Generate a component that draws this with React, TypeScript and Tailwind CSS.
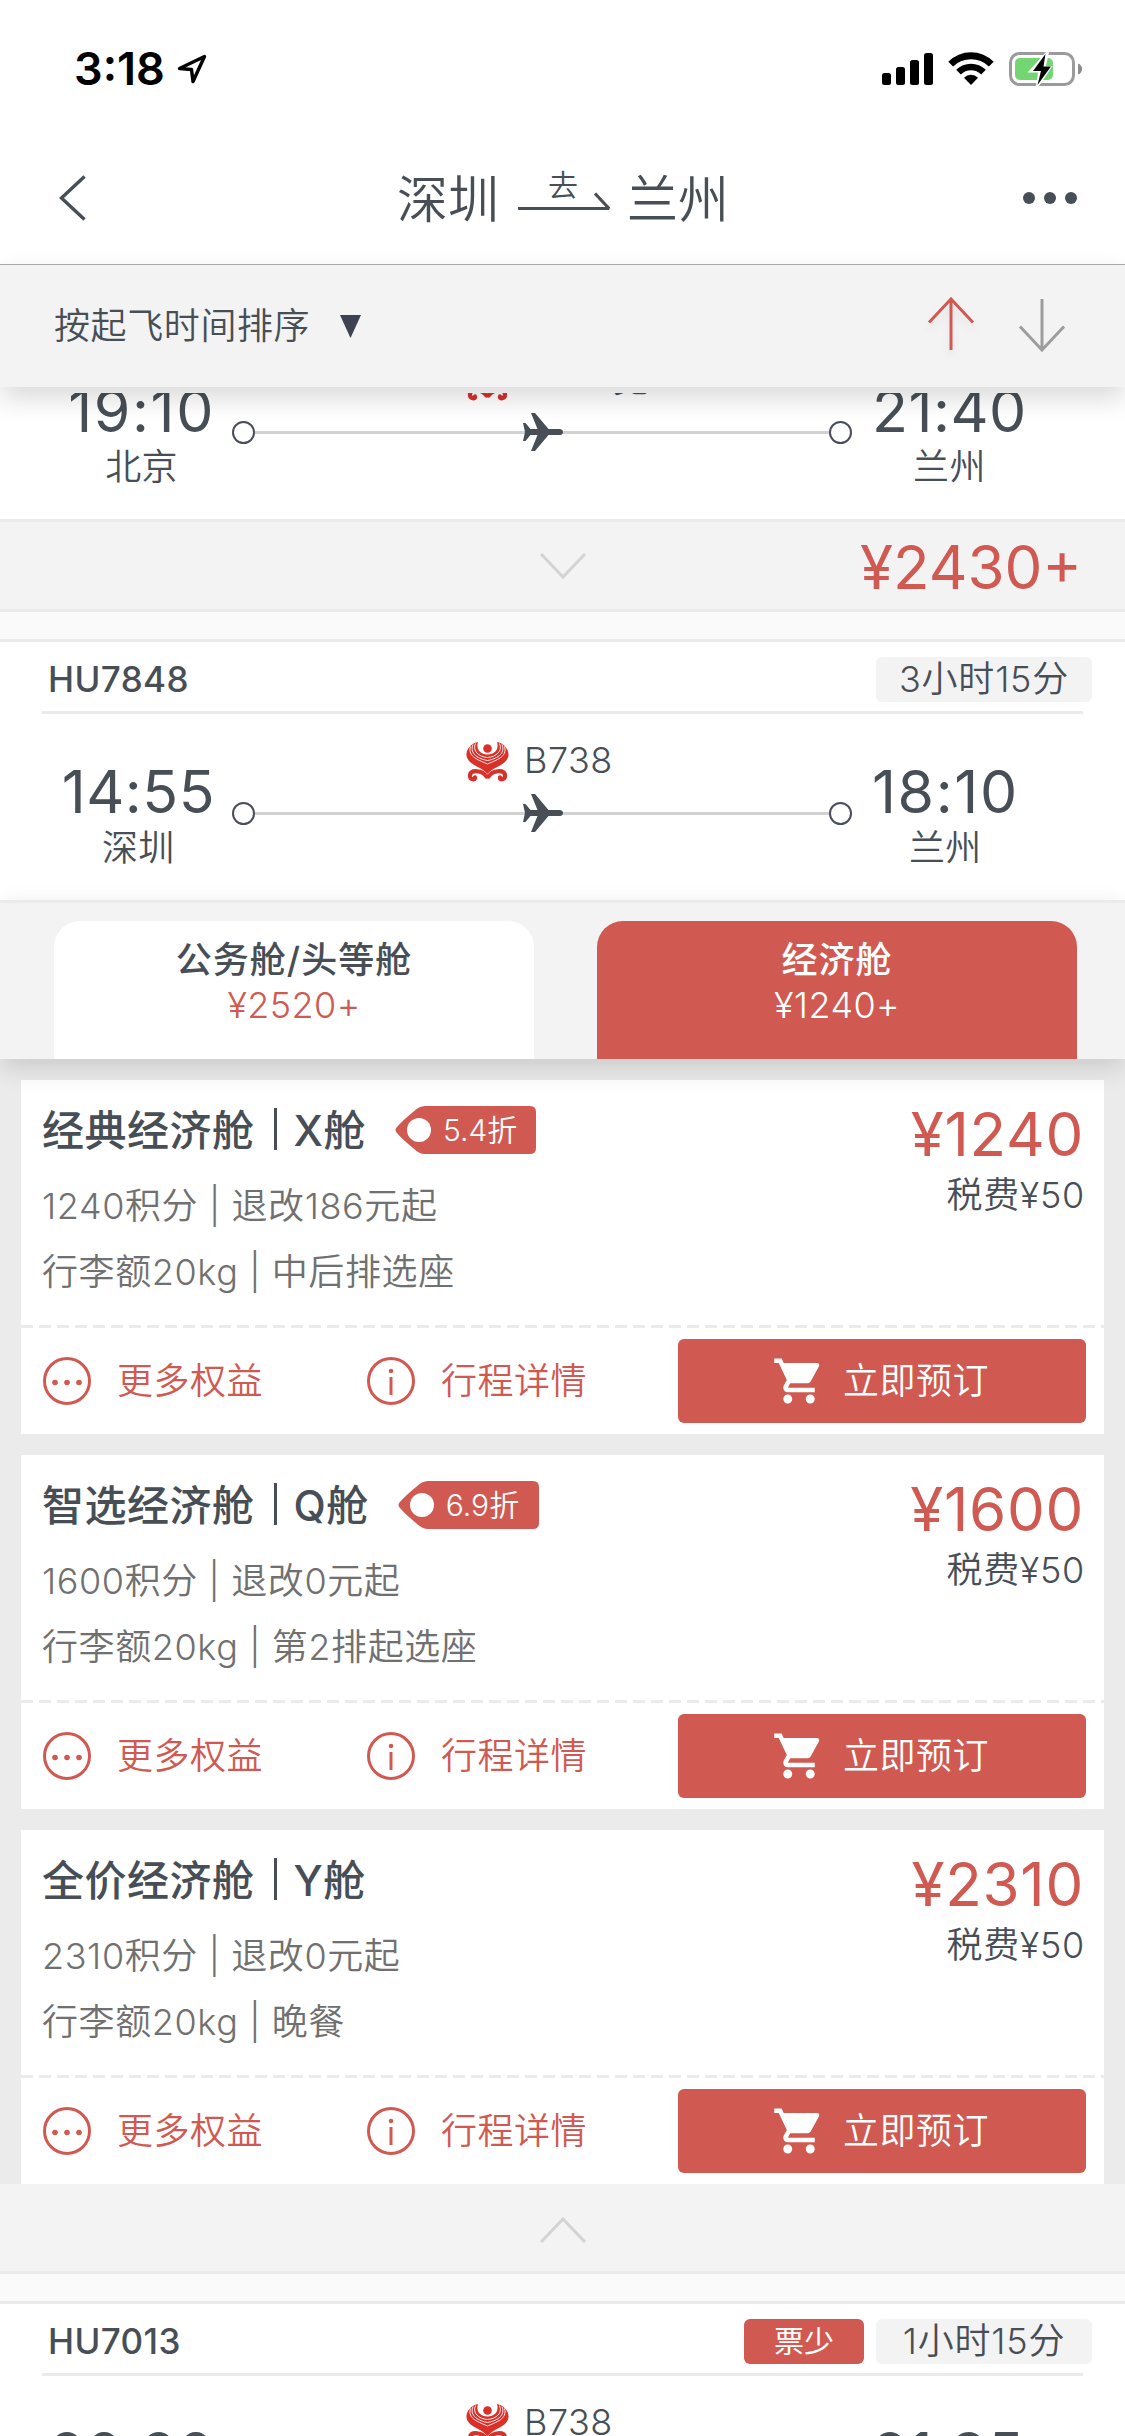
import { MdShoppingCart } from "react-icons/md";

type Flight = {
  no: string;
  duration: string;
  fewLeft?: boolean;
  plane: string;
  depTime: string;
  depCity: string;
  arrTime: string;
  arrCity: string;
};

type Fare = {
  name: string;
  cabin: string;
  discount?: string;
  points: string;
  perks: string;
  price: string;
};

const flights: Flight[] = [
  { no: "HU7197", duration: "2小时30分", plane: "B788宽", depTime: "19:10", depCity: "北京", arrTime: "21:40", arrCity: "兰州" },
  { no: "HU7848", duration: "3小时15分", plane: "B738", depTime: "14:55", depCity: "深圳", arrTime: "18:10", arrCity: "兰州" },
  { no: "HU7013", duration: "1小时15分", fewLeft: true, plane: "B738", depTime: "20:20", depCity: "西安", arrTime: "21:35", arrCity: "兰州" },
];

const fares: Fare[] = [
  { name: "经典经济舱", cabin: "X舱", discount: "5.4折", points: "1240积分 | 退改186元起", perks: "行李额20kg | 中后排选座", price: "¥1240" },
  { name: "智选经济舱", cabin: "Q舱", discount: "6.9折", points: "1600积分 | 退改0元起", perks: "行李额20kg | 第2排起选座", price: "¥1600" },
  { name: "全价经济舱", cabin: "Y舱", points: "2310积分 | 退改0元起", perks: "行李额20kg | 晚餐", price: "¥2310" },
];

function StatusBar() {
  return (
    <div className="flex h-[132px] items-start justify-between pt-[42px] pr-[42px] pl-[74px] text-black">
      <div className="flex items-center">
        <span className="text-[45px] leading-[54px] font-semibold">3:18</span>
        <svg className="ml-3 size-[30px]" viewBox="0 0 30 30" fill="none" stroke="currentColor" strokeWidth="3.4" strokeLinejoin="round">
          <path d="M27.5 2.5 L2.5 14.5 L14.5 15.5 L16 27.5 Z" />
        </svg>
      </div>
      <div className="mt-2.5 flex items-start">
        <svg className="h-[34px] w-[52px]" viewBox="0 0 52 34">
          <rect x="0" y="21" width="9" height="12" rx="2.5" />
          <rect x="14" y="15" width="9" height="18" rx="2.5" />
          <rect x="28" y="8" width="9" height="25" rx="2.5" />
          <rect x="42" y="1" width="9" height="32" rx="2.5" />
        </svg>
        <svg className="ml-3.5 h-[34px] w-[46px]" viewBox="0 0 46 34">
          <path d="M0.3 9.8 A32 32 0 0 1 45.7 9.8 L40.9 14.6 A25.2 25.2 0 0 0 5.1 14.6 Z" />
          <path d="M8.2 17.8 A21 21 0 0 1 37.8 17.8 L33.2 22.4 A14.4 14.4 0 0 0 12.8 22.4 Z" />
          <path d="M16 25.7 A10 10 0 0 1 30 25.7 L23 33 Z" />
        </svg>
        <svg className="ml-[15px] h-[34px] w-[74px]" viewBox="0 0 74 34">
          <rect x="1.5" y="1.5" width="63" height="31" rx="9" fill="none" stroke="#9b9b9b" strokeWidth="3" />
          <path d="M69 11.5 C74.5 13 74.5 21 69 22.5 Z" fill="#8e8e8e" />
          <rect x="6" y="6" width="38" height="22" rx="5" fill="#74d673" />
          <path d="M37 0 L18.5 20.5 H29 L27 34 H30 L43.5 14 H37 L40 0 Z" fill="#fff" />
          <path d="M36.5 2 L24 19 H32 L28.5 33 L42 14.5 H34.5 Z" />
        </svg>
      </div>
    </div>
  );
}

function NavBar() {
  return (
    <div className="flex h-[132px] items-center justify-between pr-12 pl-[58px] text-[#474e56]">
      <svg className="h-[46px] w-[54px]" viewBox="0 0 54 46" fill="none" stroke="currentColor" strokeWidth="3.4">
        <path d="M26.5 1.5 L3.5 23 L26.5 44.5" />
      </svg>
      <div className="mr-[9px] flex items-center pt-[3px] text-[51px] leading-[60px] font-[350]">
        <span>深圳</span>
        <div className="mr-[15px] ml-[19px] flex flex-col items-center pb-[13px]">
          <span className="-mt-[5px] -ml-1 text-[30px] leading-[28px] font-[350]">去</span>
          <svg className="-mt-[8px] h-[20px] w-[94px]" viewBox="0 0 94 20" fill="none" stroke="currentColor" strokeWidth="3.2">
            <path d="M0 17.5 H91 L77 2.5" strokeLinejoin="bevel" />
          </svg>
        </div>
        <span>兰州</span>
      </div>
      <div className="flex w-[54px] gap-[9px]">
        <span className="size-3 rounded-full bg-[#474e56]" />
        <span className="size-3 rounded-full bg-[#474e56]" />
        <span className="size-3 rounded-full bg-[#474e56]" />
      </div>
    </div>
  );
}

function SortBar() {
  return (
    <div className="relative z-10 flex h-[123px] items-center border-t border-[#a9a9a9] bg-[#f3f3f3] pr-[59px] pl-[54px] shadow-[0_12px_24px_rgba(0,0,0,0.14)]">
      <span className="text-[36px] leading-[54px] font-[350] tracking-[0.6px] text-[#474e56]">按起飞时间排序</span>
      <svg className="ml-[30px] h-[23px] w-[21px]" viewBox="0 0 21 23" fill="#3d4152">
        <path d="M0 0 H21 L10.5 23 Z" />
      </svg>
      <svg className="mr-[43px] mb-[5px] ml-auto h-[54px] w-[48px] drop-shadow-[0_6px_4px_rgba(0,0,0,0.08)]" viewBox="0 0 48 54" fill="none" stroke="#d05a51" strokeWidth="3">
        <path d="M24 53 V2 M2 25.5 L24 2 L46 25.5" />
      </svg>
      <svg className="mb-[2px] h-[54px] w-[48px]" viewBox="0 0 48 54" fill="none" stroke="#9d9d9d" strokeWidth="3">
        <path d="M24 1 V52 M2 28.5 L24 52 L46 28.5" />
      </svg>
    </div>
  );
}

function AirlineLogo() {
  return (
    <svg className="h-[41px] w-[43px]" viewBox="0 0 43 41" fill="none">
      <path
        d="M12 1 C2 3 -2 13 2 18.500 C6 25 16 26 21.500 33 C27 26 37 25 41 18.500 C45 13 41 3 31 1 C33 7 30 13.500 21.500 13.500 C13 13.500 10 7 12 1 Z"
        fill="#d9302a"
      />
      <circle cx="21.5" cy="7.5" r="4.3" fill="#d9302a" />
      <g stroke="#fff" strokeWidth="0.9">
        <path d="M9.500 2.500 C6 10 13 16 21.500 16.500 C30 16 37 10 33.500 2.500" />
        <path d="M7 3.500 C3 13 13 18 21.500 19.500 C30 18 40 13 36 3.500" />
        <path d="M4.500 5.500 C1 16 14 19.500 21.500 23 C29 19.500 42 16 38.500 5.500" />
      </g>
      <g stroke="#d9302a" strokeWidth="4.2" strokeLinecap="round">
        <path d="M20.500 35.500 C16 29 5 28.500 4 34 C3.500 39.500 10 39 9 36.500" />
        <path d="M22.500 35.500 C27 29 38 28.500 39 34 C39.500 39.500 33 39 34 36.500" />
      </g>
    </svg>
  );
}

function Route() {
  return (
    <div className="relative flex h-6 items-center">
      <span className="size-[23px] rounded-full border-2 border-[#4a4d5c] bg-white" />
      <span className="mt-[1px] h-[3px] flex-1 bg-[#d2d2d2]" />
      <span className="size-[23px] rounded-full border-2 border-[#4a4d5c] bg-white" />
      <svg className="absolute -top-[7px] left-[291px] h-[38px] w-[40px]" viewBox="0 0 40 38" fill="#474e56">
        <path d="M8 0 H12 L25.500 16 H37 Q40 16.500 40 19 Q40 21.500 37 22 H25.500 L12 38 H8 L14.500 22 H7.500 L2.500 28 H0 L2 19 L0 10 H2.500 L7.500 16 H14.500 Z" />
      </svg>
    </div>
  );
}

function Stop({ time, city }: { time: string; city: string }) {
  // times with two narrow 1s are set a little wider
  const narrow = time.split("1").length > 2;
  return (
    <div className="flex flex-col items-center">
      <span className={`text-[59px] leading-[72px] font-[380] ${narrow ? "tracking-[1.6px]" : "tracking-[0.5px]"}`}>{time}</span>
      <span className="text-[36px] leading-[40px] font-[350] tracking-[0.3px]">{city}</span>
    </div>
  );
}

function FlightCard({ flight }: { flight: Flight }) {
  return (
    <div className="h-[258px] bg-white text-[#474e56]">
      <div className="mr-[33px] ml-[42px] flex h-[69px] items-center justify-end pt-[6px]">
        <span className="mr-auto mb-[2px] ml-[6px] text-[35px] leading-[44px] font-medium tracking-[0.4px]">{flight.no}</span>
        {flight.fewLeft && (
          <span className="mr-3 w-[120px] rounded-md bg-[#d05a51] text-center text-[30px] leading-[45px] text-white">票少</span>
        )}
        <span className="h-[45px] w-[216px] rounded-md bg-[#f3f3f3] text-center text-[36px] leading-[45px] font-[350] tracking-[0.8px]">
          {flight.duration}
        </span>
      </div>
      <div className="mx-[42px] h-[3px] bg-[#ebebeb]" />
      <div className="flex h-[186px] pt-[41px] pl-[60px]">
        <div className="flex w-[172px] shrink-0 justify-end pt-[1px] pr-[17px]">
          <Stop time={flight.depTime} city={flight.depCity} />
        </div>
        <div className="flex w-[620px] shrink-0 flex-col">
          <div className="mt-[-20px] ml-[234px] flex h-[53px] items-center gap-[15px] text-[36px] leading-[45px] font-[350] whitespace-nowrap">
            <AirlineLogo />
            <span className="-mt-[3px] tracking-[0.5px]">{flight.plane}</span>
          </div>
          <div className="mt-[13px]">
            <Route />
          </div>
        </div>
        <div className="flex pt-[1px] pl-[20px]">
          <Stop time={flight.arrTime} city={flight.arrCity} />
        </div>
      </div>
    </div>
  );
}

function Chevron({ up }: { up?: boolean }) {
  return (
    <svg className="h-[26px] w-[46px]" viewBox="0 0 46 26" fill="none" stroke="#d3d3d3" strokeWidth="3">
      <path d={up ? "M1 25 L23 2 L45 25" : "M1 1 L23 24 L45 1"} />
    </svg>
  );
}

function Spacer() {
  return <div className="h-[33px] border-y-[3px] border-[#ebebeb] bg-[#fafafa]" />;
}

function CabinTab({ label, price, active }: { label: string; price: string; active?: boolean }) {
  return (
    <div
      className={`flex h-[138px] w-[480px] flex-col items-center rounded-t-[26px] pt-[16px] ${
        active ? "bg-[#d05a51] text-white" : "bg-white text-[#474e56]"
      }`}
    >
      <span className="text-[36px] leading-[46px] font-medium tracking-[1px]">{label}</span>
      <span className={`text-[36px] leading-[45px] font-[350] tracking-[0.4px] ${active ? "" : "text-[#d05a51]"}`}>{price}</span>
    </div>
  );
}

function DiscountTag({ text }: { text: string }) {
  return (
    <div className="relative ml-[29px] h-12 w-[141px] font-[350] text-white">
      <svg className="absolute inset-0 size-full" viewBox="0 0 141 48">
        <path d="M30 0 H135 Q141 0 141 6 V42 Q141 48 135 48 H30 Q24 48 18 42 Q7 33 1.500 26.500 Q-0.500 24 1.500 21.500 Q7 15 18 6 Q24 0 30 0 Z" fill="#d05a51" />
        <circle cx="24" cy="24" r="12" fill="#fff" />
      </svg>
      <span className="relative block pl-12 text-[30px] leading-[48px] tracking-normal whitespace-nowrap">{text}</span>
    </div>
  );
}

function FareCard({ fare }: { fare: Fare }) {
  return (
    <div className="h-[354px] bg-white">
      <div className="flex h-[245px] justify-between pr-[20px] pl-[21px]">
        <div>
          <div className="mt-[20px] flex h-[60px] items-center text-[42px] font-medium tracking-[0.5px] text-[#474e56]">
            <span>{fare.name}</span>
            <span className="mr-[17px] mb-[2px] ml-[19px] h-[42px] w-[3px] bg-[#474e56]" />
            <span>{fare.cabin}</span>
            {fare.discount && <DiscountTag text={fare.discount} />}
          </div>
          <p className="mt-[13px] text-[36px] leading-[66px] font-[350] tracking-[0.6px] text-[#707070]">{fare.points}</p>
          <p className="text-[36px] leading-[66px] font-[350] tracking-[0.6px] text-[#707070]">{fare.perks}</p>
        </div>
        <div className="flex flex-col items-end pt-[18px]">
          <span className="text-[60px] leading-[72px] font-[370] tracking-[0.7px] text-[#d05a51]">{fare.price}</span>
          <span className="mt-[1px] -mr-[1px] text-[36px] leading-[48px] font-[350] tracking-[0.7px] text-[#474e56]">税费¥50</span>
        </div>
      </div>
      <svg className="block h-[3px] w-full" viewBox="0 0 1083 3">
        <path d="M0 1.5 H1083" stroke="#ebebeb" strokeWidth="3" strokeDasharray="12 6" />
      </svg>
      <div className="flex items-center pt-[11px] pl-[22px] text-[36px] font-[350] tracking-[0.5px] text-[#d05a51]">
        <svg className="size-12" viewBox="0 0 48 48" fill="currentColor">
          <circle cx="24" cy="24" r="22.500" fill="none" stroke="currentColor" strokeWidth="3" />
          <circle cx="12" cy="25.500" r="2.8" />
          <circle cx="24" cy="25.500" r="2.8" />
          <circle cx="36" cy="25.500" r="2.8" />
        </svg>
        <span className="ml-[26px] leading-[54px]">更多权益</span>
        <svg className="ml-[104px] size-12" viewBox="0 0 48 48" fill="currentColor">
          <circle cx="24" cy="24" r="22.500" fill="none" stroke="currentColor" strokeWidth="3" />
          <circle cx="24" cy="14" r="2.300" />
          <path d="M22.500 20 H25.500 V38 H22.500 Z" />
        </svg>
        <span className="ml-[26px] leading-[54px]">行程详情</span>
        <button type="button" className="ml-[91px] flex h-[84px] w-[408px] items-center rounded-md bg-[#d05a51] pl-[94px] text-white">
          <MdShoppingCart className="size-[54px]" />
          <span className="ml-[17px]">立即预订</span>
        </button>
      </div>
    </div>
  );
}

export default function App() {
  return (
    <div
      lang="zh-CN"
      className="h-[2436px] w-[1125px] overflow-hidden bg-white font-[Inter,'Noto_Sans_CJK_SC',sans-serif]"
    >
      <StatusBar />
      <NavBar />
      <SortBar />
      {/* the list scrolls under the sort bar, first flight is cut off */}
      <div className="mt-[6px] h-[2043px] overflow-hidden">
        <div className="-mt-[132px]">
          <FlightCard flight={flights[0]} />
          <div className="flex h-[90px] items-center border-t-[3px] border-[#ebebeb] bg-[#f3f3f3] pr-[43px] pl-[540px]">
            <Chevron />
            <span className="ml-auto pt-[2px] text-[60px] leading-[72px] font-[370] text-[#d05a51]">¥2430+</span>
          </div>
          <Spacer />
          <FlightCard flight={flights[1]} />
          <div className="relative flex justify-between border-t-[3px] border-[#ebebeb] bg-[#f3f3f3] pt-[18px] pr-12 pl-[54px] shadow-[0_9px_24px_rgba(0,0,0,0.14)]">
            <CabinTab label="公务舱/头等舱" price="¥2520+" />
            <CabinTab label="经济舱" price="¥1240+" active />
          </div>
          <div className="flex flex-col gap-[21px] bg-[#ebebeb] px-[21px] pt-[21px]">
            {fares.map((fare) => (
              <FareCard key={fare.name} fare={fare} />
            ))}
          </div>
          <div className="flex h-[87px] items-center justify-center bg-[#f3f3f3] pt-1">
            <Chevron up />
          </div>
          <Spacer />
          <FlightCard flight={flights[2]} />
        </div>
      </div>
    </div>
  );
}
